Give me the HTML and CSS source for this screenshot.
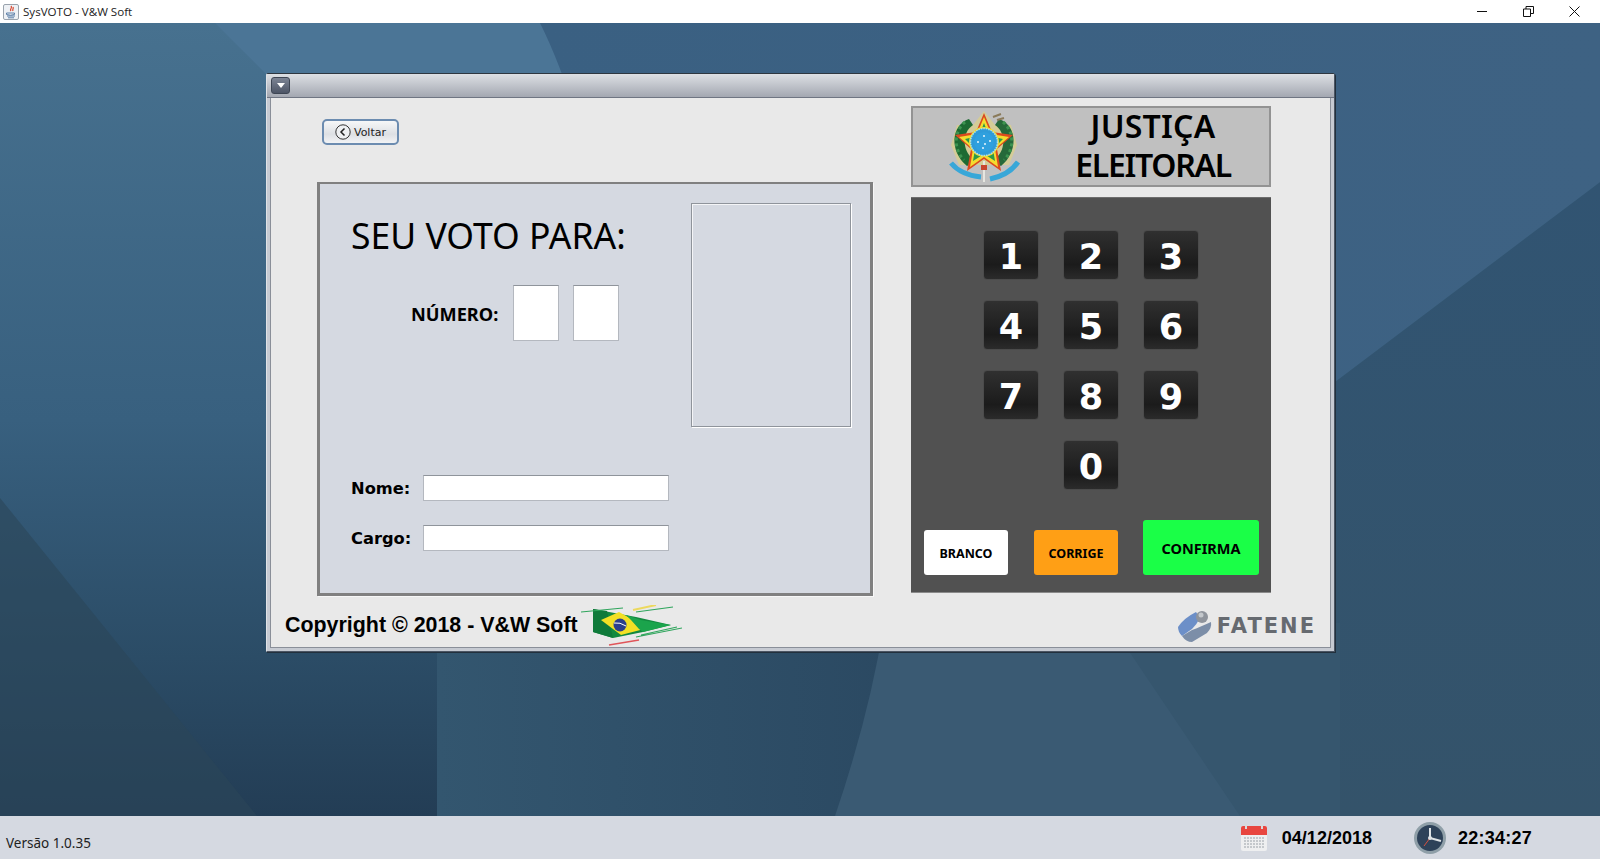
FILE: index.html
```html
<!DOCTYPE html>
<html lang="pt-BR">
<head>
  <meta charset="UTF-8">
  <title>SysVOTO - V&amp;W Soft</title>
  <link rel="stylesheet" href="styles.css">
</head>
<body>

  <header class="titlebar">
    <svg class="app-icon" width="16" height="16" viewBox="0 0 16 16">
      <rect x="0.5" y="0.5" width="15" height="15" rx="1.5" fill="#eef1f5" stroke="#9aa3ad"/>
      <path d="M8 2c2 2-2 3 0 5M10 3c1 2-1 2 0 4" fill="none" stroke="#d8432b" stroke-width="1.2"/>
      <path d="M3.5 9h8v1.5q-4 1.5-8 0zM4 12h8M5 13.800h6" fill="none" stroke="#5b7fa8" stroke-width="1"/>
    </svg>
    <span class="app-title">SysVOTO - V&amp;W Soft</span>
    <div class="win-controls">
      <svg width="11" height="11" viewBox="0 0 11 11"><path d="M0 5.500h10" stroke="#111" fill="none"/></svg>
      <svg width="11" height="11" viewBox="0 0 11 11"><path d="M.5 3h7v7.500h-7zM3 3V.5h7.500v7H8" stroke="#111" fill="none"/></svg>
      <svg width="11" height="11" viewBox="0 0 11 11"><path d="M.5.500l10 10M10.500.500l-10 10" stroke="#111" fill="none"/></svg>
    </div>
  </header>

  <div class="desktop">
    <svg class="wallpaper" viewBox="0 0 1600 793" preserveAspectRatio="none">
      <defs>
        <linearGradient id="wpBase" x1="0" y1="0" x2="0" y2="1">
          <stop offset="0" stop-color="#47718f"/>
          <stop offset=".5" stop-color="#38607f"/>
          <stop offset=".8" stop-color="#2b4c66"/>
          <stop offset="1" stop-color="#233d55"/>
        </linearGradient>
        <linearGradient id="wpTop" x1="0" y1="0" x2="1" y2="0">
          <stop offset="0" stop-color="#3a6082"/>
          <stop offset="1" stop-color="#3e6283"/>
        </linearGradient>
        <linearGradient id="wpRight" x1="0" y1="0" x2="0" y2="1">
          <stop offset="0" stop-color="#315472"/>
          <stop offset="1" stop-color="#34536a"/>
        </linearGradient>
        <linearGradient id="wpMid" x1="0" y1="0" x2="1" y2="0">
          <stop offset="0" stop-color="#33566f"/>
          <stop offset="1" stop-color="#2b4962"/>
        </linearGradient>
      </defs>
      <rect width="1600" height="793" fill="url(#wpBase)"/>
      <path d="M215 0L300 85H600L540 0z" fill="#4b7596"/>
      <path d="M0 475L257 793H0z" fill="#2c4658" opacity=".6"/>
      <path d="M540 0H1600V159L1335 359V400H640Q600 120 540 0z" fill="url(#wpTop)"/>
      <path d="M1335 359L1600 159V793H1300V359z" fill="url(#wpRight)"/>
      <path d="M437 600H900V793H437z" fill="url(#wpMid)"/>
      <path d="M884 600H1320V793H835Q870 690 884 600z" fill="#3a5a73"/>
      <path d="M1110 600H1340V793H1240z" fill="#36566e"/>
    </svg>

    <section class="frame">
      <div class="frame-title">
        <button class="menu-btn"><span class="menu-arrow"></span></button>
      </div>
      <div class="frame-body">

        <div class="left-col">
          <button class="back-btn">
            <svg width="16" height="16" viewBox="0 0 16 16">
              <circle cx="8" cy="8" r="7.200" fill="#eef0f2" stroke="#333"/>
              <path d="M9.500 4.500L6 8l3.500 3.500" fill="none" stroke="#222" stroke-width="1.500"/>
            </svg>
            Voltar
          </button>

          <div class="vote-panel">
            <div class="vote-fields">
              <h2 class="vote-heading">SEU VOTO PARA:</h2>
              <div class="number-row">
                <span class="number-label">NÚMERO:</span>
                <div class="digit-box"></div>
                <div class="digit-box"></div>
              </div>
              <div class="field-row name-row">
                <label class="field-label">Nome:</label>
                <div class="field-input"></div>
              </div>
              <div class="field-row">
                <label class="field-label">Cargo:</label>
                <div class="field-input"></div>
              </div>
            </div>
            <div class="photo-box"></div>
          </div>
        </div>

        <div class="right-col">
          <div class="court-header">
            <svg class="court-seal" width="72" height="71" viewBox="0 0 72 71">
              <path d="M35 0L46 14 62 14 68 34 60 54H10L2 34 8 14 24 14z" fill="#e3d675" opacity=".55"/>
              <path d="M20 8C2 14 0 40 18 55l9-5C13 42 12 22 24 14z" fill="#1d6a32"/>
              <path d="M50 8C68 14 70 40 52 55l-9-5C57 42 58 22 46 14z" fill="#26693a"/>
              <path d="M16 11C5 20 4 38 15 49" fill="none" stroke="#3d9450" stroke-width="3" stroke-dasharray="3 3"/>
              <path d="M54 11C65 20 66 38 55 49" fill="none" stroke="#3d9450" stroke-width="3" stroke-dasharray="3 3"/>
              <path d="M44 6l8-3M48 9l7-2" stroke="#8a7a5a" stroke-width="2"/>
              <polygon points="35,2 43,21 64,24 48,38 52,60 35,48 18,60 22,38 6,24 27,21" fill="#dc4a1e"/>
              <polygon points="35,6 42,23 60,26 46,38 49,56 35,46 21,56 24,38 10,26 28,23" fill="#f4dc2e"/>
              <polygon points="35,12 40,25 54,28 44,38 46,50 35,43 24,50 26,38 16,28 30,25" fill="#2c9a4a"/>
              <circle cx="35" cy="31" r="15" fill="#f3d92c"/>
              <circle cx="35" cy="31" r="13.500" fill="#2f9bd8" stroke="#a8e0ee" stroke-width="1.500" stroke-dasharray="1.500 1"/>
              <circle cx="35" cy="31" r="10" fill="#2fa0de"/>
              <g fill="#e8f6fb">
                <circle cx="35" cy="25" r="1"/><circle cx="29" cy="31" r="1"/><circle cx="41" cy="30" r="1"/>
                <circle cx="36" cy="33" r="1"/><circle cx="34" cy="37" r="1"/>
              </g>
              <path d="M35 50v21" stroke="#e6e6e0" stroke-width="2"/>
              <rect x="32" y="54" width="6" height="5" fill="#c8452e"/>
              <path d="M2 52Q12 64 32 66M69 51Q60 64 41 68" fill="none" stroke="#38a7d8" stroke-width="5"/>
            </svg>
            <div class="court-name"><span class="court-first">JUSTIÇA</span><br>ELEITORAL</div>
          </div>

          <div class="keypad">
            <div class="key-grid">
              <button class="key">1</button>
              <button class="key">2</button>
              <button class="key">3</button>
              <button class="key">4</button>
              <button class="key">5</button>
              <button class="key">6</button>
              <button class="key">7</button>
              <button class="key">8</button>
              <button class="key">9</button>
              <button class="key key-zero">0</button>
            </div>
            <div class="action-row">
              <button class="action-btn btn-branco">BRANCO</button>
              <button class="action-btn btn-corrige">CORRIGE</button>
              <button class="action-btn btn-confirma">CONFIRMA</button>
            </div>
          </div>
        </div>

        <div class="frame-footer">
          <div class="copyright">
            <span class="copyright-text">Copyright © 2018 - V&amp;W Soft</span>
            <svg class="flag-logo" width="101" height="41" viewBox="0 0 101 41">
              <polygon points="12,4 55,12 90,20 62,27 32,33 12,27" fill="#12893f"/>
              <polygon points="12,4 26,6 32,33 12,27" fill="#0f7a3a"/>
              <polygon points="20,15 38,7 67,23 40,30" fill="#f3e025"/>
              <circle cx="39" cy="20" r="6.500" fill="#2b3f8c"/>
              <path d="M33 18q6-1 12 3" stroke="#fff" stroke-width="1" fill="none"/>
              <polygon points="45,10 60,15 90,20 62,27 58,24 50,15" fill="#1ba44c"/>
              <path d="M0 7L42 3M55 7L92 2M55 32L101 23M60 30L96 22" stroke="#2fa55c" stroke-width="1.200" fill="none"/>
              <path d="M52 5L75 0" stroke="#ecd95e" stroke-width="2" fill="none"/>
              <path d="M28 40L58 35" stroke="#e0555a" stroke-width="1.500" fill="none"/>
            </svg>
          </div>
          <div class="school-logo">
            <svg width="34" height="32" viewBox="0 0 34 32">
              <path d="M0 17Q6 8 18 2l4 6q-3 6-8 11L4 26Q0 22 0 17z" fill="#6c8fc8"/>
              <path d="M14 20q8-3 19-8q1 6-4 11l-15 9q-6 0-10-6z" fill="#7c8ea8"/>
              <circle cx="24" cy="7" r="6" fill="#8f949c"/>
              <circle cx="23" cy="5" r="2.500" fill="#c4c8cc"/>
            </svg>
            <span class="school-name">FATENE</span>
          </div>
        </div>

      </div>
    </section>
  </div>

  <footer class="statusbar">
    <span class="version">Versão 1.0.35</span>
    <div class="clock-group">
      <svg width="26" height="27" viewBox="0 0 26 27">
        <rect x="0" y="2" width="26" height="25" rx="2" fill="#eeeff0"/>
        <path d="M0 4q0-2 2-2h22q2 0 2 2v7H0z" fill="#e8463f"/>
        <path d="M5 0v5M21 0v5" stroke="#d8dadc" stroke-width="2"/>
        <path d="M3 14h20M3 17h20M3 20h20M3 23h20" stroke="#c4c8cc" stroke-width="2" stroke-dasharray="2 1"/>
      </svg>
      <span class="clock-text date-text">04/12/2018</span>
      <svg width="32" height="32" viewBox="0 0 32 32">
        <circle cx="16" cy="16" r="16" fill="#8f9fa8"/>
        <circle cx="16" cy="16" r="13" fill="#2e4259"/>
        <path d="M16 16L10 24" stroke="#d8503e" stroke-width="1"/>
        <path d="M16 16V6M16 16l11 3" stroke="#dfe3e6" stroke-width="2" fill="none"/>
        <circle cx="16" cy="16" r="2" fill="#dfe3e6"/>
      </svg>
      <span class="clock-text time-text">22:34:27</span>
    </div>
  </footer>

</body>
</html>
```

FILE: styles.css
```css
* {
  box-sizing: border-box;
}

body {
  margin: 0;
  height: 100vh;
  overflow: hidden;
  display: flex;
  flex-direction: column;
  font-family: "Noto Sans", sans-serif;
  color: #000;
}

button {
  font-family: inherit;
  padding: 0;
  border: 0;
}

/* window title bar */
.titlebar {
  height: 23px;
  flex: none;
  background: #fff;
  display: flex;
  align-items: center;
  padding-left: 3px;
}

.app-title {
  margin-left: 4px;
  font-family: "Open Sans", sans-serif;
  font-size: 11.600px;
  color: #222;
}

.win-controls {
  margin-left: auto;
  margin-right: 20px;
  display: flex;
  gap: 35px;
}

/* desktop */
.desktop {
  flex: 1;
  position: relative;
  padding: 50px 0 0 266px;
}

.wallpaper {
  position: absolute;
  top: 0;
  left: 0;
  width: 100%;
  height: 100%;
}

.frame {
  position: relative;
  width: 1069px;
  height: 579px;
  background: #c6cad2;
  border: 1px solid #4b5563;
  border-top-color: #2e3740;
  border-left-color: #dfe2e6;
  border-radius: 2px 2px 0 0;
  padding: 0 3px 4px;
  box-shadow: 1px 1px 0 #22303d;
}

.frame-title {
  height: 24px;
  display: flex;
  align-items: center;
  margin: 0 -3px;
  padding-left: 4px;
  background: linear-gradient(#dde0e4, #a3a7b1);
  border-bottom: 1px solid #6f7582;
}

.menu-btn {
  width: 19px;
  height: 17px;
  border-radius: 3px;
  background: linear-gradient(#7c8494, #4d5566);
  border: 1px solid #3e4654;
  display: flex;
  align-items: center;
  justify-content: center;
}

.menu-arrow {
  width: 0;
  height: 0;
  border-left: 4px solid transparent;
  border-right: 4px solid transparent;
  border-top: 5px solid #fff;
}

.frame-body {
  height: 550px;
  background: #e9e9e9;
  display: grid;
  grid-template-columns: 640px 360px;
  grid-template-rows: 498px 1fr;
  border: 1px solid #8a8f99;
  border-top: 0;
}

.left-col {
  padding: 21px 0 0 46px;
}

/* back button */
.back-btn {
  width: 77px;
  height: 26px;
  margin-left: 5px;
  display: flex;
  align-items: center;
  justify-content: center;
  gap: 3px;
  border: 2px solid #6c8cb0;
  border-radius: 5px;
  background: linear-gradient(#f6f7f8, #dde0e4 60%, #f2f3f5);
  font-family: "DejaVu Sans", sans-serif;
  font-size: 11px;
  color: #222;
}

/* vote panel */
.vote-panel {
  margin-top: 37px;
  width: 556px;
  height: 414px;
  background: #d5d9e1;
  border: 3px solid #808080;
  border-top-width: 2px;
  box-shadow: 1px 1px 0 #f7f7f7;
  display: flex;
  justify-content: space-between;
  padding: 19px 19px 0 31px;
}

.vote-heading {
  margin: 7px 0 0;
  font-size: 35.500px;
  font-weight: 400;
  line-height: 50px;
}

.number-row {
  margin-top: 25px;
  padding-left: 60px;
  display: flex;
  align-items: center;
  height: 56px;
}

.number-label {
  width: 102px;
  padding-top: 2px;
  font-size: 18.200px;
  font-weight: 700;
}

.digit-box {
  width: 46px;
  height: 56px;
  margin-right: 14px;
  background: #fff;
  border: 1px solid #b4b8bf;
  border-top-color: #8f949b;
}

.field-row {
  display: flex;
  align-items: center;
  height: 26px;
  margin-top: 24px;
}

.name-row {
  margin-top: 134px;
}

.field-label {
  width: 72px;
  font-family: "DejaVu Sans", sans-serif;
  font-size: 16.300px;
  font-weight: 700;
}

.field-input {
  width: 246px;
  height: 26px;
  background: #fff;
  border: 1px solid #b4b8bf;
  border-top-color: #8f949b;
}

.photo-box {
  width: 160px;
  height: 224px;
  border: 1px solid #8f949b;
  box-shadow: 1px 1px 0 #fff, inset 1px 1px 0 #f4f5f7;
}

/* right column */
.right-col {
  padding-top: 8px;
}

.court-header {
  height: 81px;
  background: #c0c0c0;
  border: 2px solid #939393;
  display: flex;
  align-items: center;
  padding-left: 36px;
}

.court-name {
  flex: 1;
  margin: -4px 0 0 16px;
  text-align: center;
  font-size: 32px;
  font-weight: 600;
  line-height: 39px;
  letter-spacing: -1.300px;
}

.court-first {
  letter-spacing: .2px;
}

.keypad {
  margin-top: 10px;
  height: 396px;
  background: #515151;
  border-top: 1px solid #6d6d6d;
  border-bottom: 1px solid #8a8a8a;
  display: flex;
  flex-direction: column;
  justify-content: space-between;
  padding: 32px 12px 17px 13px;
}

.key-grid {
  display: grid;
  grid-template-columns: repeat(3, 56px);
  grid-auto-rows: 50px;
  gap: 20px 24px;
  margin-left: 59px;
}

.key {
  padding-top: 3px;
  border-radius: 4px;
  border: 1px solid #4b4b4b;
  background: linear-gradient(#303030, #1b1b1b 70%, #2b2b2b);
  color: #fff;
  font-family: "DejaVu Sans", sans-serif;
  font-size: 35px;
  font-weight: 700;
}

.key-zero {
  grid-column: 2;
}

.action-row {
  display: flex;
  align-items: flex-end;
}

.action-btn {
  height: 45px;
  padding-top: 2px;
  border-radius: 3px;
  font-size: 12.500px;
  font-weight: 700;
}

.btn-branco {
  width: 84px;
  background: #fff;
}

.btn-corrige {
  width: 84px;
  margin-left: 26px;
  background: #ff9f15;
}

.btn-confirma {
  width: 116px;
  height: 55px;
  margin-left: 25px;
  padding-top: 0;
  background: #1aff47;
  font-size: 14.500px;
}

/* footer of the frame */
.frame-footer {
  grid-column: 1 / 3;
  width: 1058px;
  display: flex;
  align-items: center;
  justify-content: space-between;
  padding: 8px 13px 0 14px;
}

.copyright {
  display: flex;
  align-items: center;
}

.copyright-text {
  font-family: "Liberation Sans", sans-serif;
  font-size: 21.400px;
  font-weight: 700;
}

.flag-logo {
  margin-left: 3px;
}

.school-logo {
  display: flex;
  align-items: center;
  gap: 5px;
}

.school-name {
  font-family: "DejaVu Sans", sans-serif;
  font-size: 21px;
  font-weight: 700;
  letter-spacing: 2px;
  color: #666a70;
}

/* bottom status bar */
.statusbar {
  height: 43px;
  flex: none;
  background: #d5d9e1;
  display: flex;
  padding-left: 6px;
}

.version {
  align-self: flex-end;
  margin-bottom: 7px;
  font-size: 13.500px;
  color: #222;
}

.clock-group {
  margin-left: auto;
  margin-right: 68px;
  display: flex;
  align-items: center;
  height: 43px;
}

.clock-text {
  margin-left: 15px;
  padding-top: 2px;
  font-family: "Liberation Sans", sans-serif;
  font-size: 18px;
  font-weight: 700;
}

.date-text {
  margin-right: 42px;
}

.time-text {
  margin-left: 12px;
  letter-spacing: .25px;
}
```
